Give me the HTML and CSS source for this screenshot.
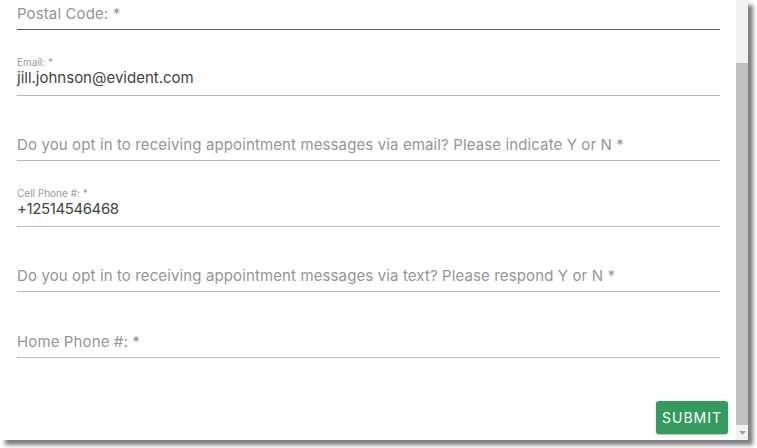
FILE: index.html
```html
<!DOCTYPE html>
<html>
<head>
<meta charset="utf-8">
<link rel="stylesheet" href="styles.css">
</head>
<body>
<div class="window">
  <div class="content">
    <form class="form">
      <div class="field field-first focused">
        <div class="placeholder">Postal Code: *</div>
      </div>
      <div class="field">
        <div class="label">Email: *</div>
        <div class="value">jill.johnson@evident.com</div>
      </div>
      <div class="field">
        <div class="placeholder">Do you opt in to receiving appointment messages via email? Please indicate Y or N *</div>
      </div>
      <div class="field">
        <div class="label">Cell Phone #: *</div>
        <div class="value value-num">+12514546468</div>
      </div>
      <div class="field">
        <div class="placeholder">Do you opt in to receiving appointment messages via text? Please respond Y or N *</div>
      </div>
      <div class="field">
        <div class="placeholder">Home Phone #: *</div>
      </div>
      <div class="actions">
        <button type="button" class="submit">SUBMIT</button>
      </div>
    </form>
  </div>
  <div class="scrollbar">
    <div class="track-top"></div>
    <div class="thumb"></div>
    <div class="arrow"><svg width="7" height="4" viewBox="0 0 7 4"><path d="M0 0H7L3.5 4Z" fill="#a3a3a3"/></svg></div>
  </div>
</div>
</body>
</html>
```

FILE: styles.css
```css
html, body {
  margin: 0;
  padding: 0;
  background: #ffffff;
}
body {
  width: 757px;
  height: 448px;
  overflow: hidden;
  font-family: Inter, "Noto Sans", sans-serif;
}
.window {
  width: 748px;
  height: 440px;
  display: flex;
  background: #fff;
  box-shadow: 5px 5px 4px rgba(0, 0, 0, 0.5);
}
.content {
  flex: 1;
  padding: 0 16px 0 17px;
}
.form {
  display: flex;
  flex-direction: column;
}
.field {
  height: 65.6px;
  box-sizing: border-box;
  display: flex;
  flex-direction: column;
  justify-content: flex-end;
  border-bottom: 1px solid #b8b8b8;
}
.field-first {
  height: 30px;
}
.focused {
  border-bottom-color: #5a5a5a;
}
.label {
  font-size: 10px;
  line-height: 12px;
  color: #999999;
}
.value {
  font-size: 15px;
  line-height: 20px;
  color: #3f4541;
  padding-bottom: 7px;
}
.value-num {
  letter-spacing: -0.4px;
}
.placeholder {
  font-size: 15px;
  line-height: 20px;
  color: #959595;
  letter-spacing: 0.12px;
  padding-bottom: 5px;
}
.actions {
  display: flex;
  justify-content: flex-end;
  padding-top: 43px;
  margin-right: -8px;
}
.submit {
  width: 72px;
  height: 33px;
  border: none;
  border-radius: 3px;
  background: #349a5e;
  color: #ffffff;
  font-family: Inter, "Noto Sans", sans-serif;
  font-size: 14px;
  letter-spacing: 1px;
  padding: 0;
  box-shadow: 0 1px 2px rgba(0, 0, 0, 0.3);
}
.scrollbar {
  width: 12px;
  display: flex;
  flex-direction: column;
  background: #f1f1f1;
}
.track-top {
  height: 63px;
}
.thumb {
  height: 362px;
  background: #c1c1c1;
}
.arrow {
  flex: 1;
  display: flex;
  align-items: center;
  justify-content: center;
}
```
